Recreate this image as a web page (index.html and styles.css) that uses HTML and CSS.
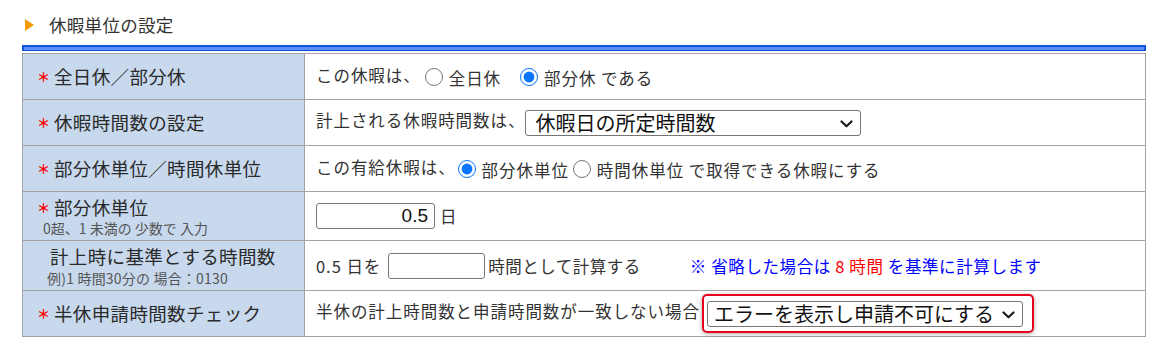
FILE: index.html
```html
<!DOCTYPE html>
<html lang="ja">
<head>
<meta charset="utf-8">
<title>休暇単位の設定</title>
<link rel="stylesheet" href="styles.css">
</head>
<body>
<div class="page">
  <div class="title"><span class="tri"></span><span class="title-text">休暇単位の設定</span></div>
  <div class="bar"></div>
  <table class="form">
    <colgroup><col class="c-label"><col class="c-value"></colgroup>
    <tr class="r46">
      <th><span class="req">＊</span>全日休／部分休</th>
      <td>この休暇は、<input type="radio" name="a" class="rb rb1"><span>全日休</span><input type="radio" name="a" class="rb rb2" checked><span>部分休 である</span></td>
    </tr>
    <tr class="r46">
      <th><span class="req">＊</span>休暇時間数の設定</th>
      <td>計上される休暇時間数は、<span class="sel"><select class="s1"><option>休暇日の所定時間数</option></select><svg class="chev" viewBox="0 0 13 8"><path d="M1.5 1.5 L6.5 6.3 L11.5 1.5" /></svg></span></td>
    </tr>
    <tr class="r46">
      <th><span class="req">＊</span>部分休単位／時間休単位</th>
      <td>この有給休暇は、<input type="radio" name="b" class="rb rb3" checked><span>部分休単位</span><input type="radio" name="b" class="rb rb4"><span>時間休単位 で取得できる休暇にする</span></td>
    </tr>
    <tr class="r49">
      <th class="two"><div class="main"><span class="req">＊</span>部分休単位</div><div class="sub sub1">0超、1 未満の 少数で 入力</div></th>
      <td><input type="text" class="num" value="0.5"><span class="unit">日</span></td>
    </tr>
    <tr class="r50">
      <th class="two"><div class="main nomark">計上時に基準とする時間数</div><div class="sub sub2">例)1 時間30分の 場合：0130</div></th>
      <td><span class="pre">0.5 日を</span><input type="text" class="hrs" value=""><span class="calc">時間として計算する</span><span class="note">※ 省略した場合は <span class="red">8 時間</span> を基準に計算します</span></td>
    </tr>
    <tr class="r46">
      <th><span class="req">＊</span>半休申請時間数チェック</th>
      <td>半休の計上時間数と申請時間数が一致しない場合<span class="hl"><span class="sel"><select class="s2"><option>エラーを表示し申請不可にする</option></select><svg class="chev" viewBox="0 0 13 8"><path d="M1.5 1.5 L6.5 6.3 L11.5 1.5" /></svg></span></span></td>
    </tr>
  </table>
</div>
</body>
</html>
```
FILE: styles.css
```css
html, body {
  margin: 0;
  padding: 0;
  background: #ffffff;
}
body {
  font-family: "Noto Sans CJK JP", "Noto Sans", sans-serif;
  color: #333333;
}
.page {
  width: 1168px;
}
.title {
  display: flex;
  align-items: center;
  height: 22px;
  padding: 14px 0 0 25px;
  margin-bottom: 9px;
}
.tri {
  width: 0;
  height: 0;
  border-top: 6px solid transparent;
  border-bottom: 6px solid transparent;
  border-left: 9px solid #f29a00;
  margin-right: 15px;
}
.title-text {
  font-size: 17.5px;
  line-height: 22px;
  letter-spacing: 0.3px;
  color: #333333;
}
.bar {
  margin-left: 22px;
  width: 1120px;
  height: 3px;
  background: #5c90f6;
  border: 2px solid #0b56dc;
  border-bottom-width: 1px;
  box-sizing: content-box;
}
.form {
  margin: 2px 0 0 22px;
  width: 1124px;
  border-collapse: collapse;
  table-layout: fixed;
}
.c-label { width: 282px; }
.form th, .form td {
  border: 1px solid #a3a3a3;
  padding: 0;
  vertical-align: middle;
}
.form th {
  background: #c8d9ee;
  text-align: left;
  font-weight: normal;
  font-size: 18.5px;
  line-height: 22px;
  letter-spacing: 0.35px;
  color: #2a2a2a;
  padding-left: 14px;
  white-space: nowrap;
}
.form td {
  font-size: 16.5px;
  line-height: 22px;
  letter-spacing: 0.95px;
  padding-left: 11px;
  white-space: nowrap;
  color: #333333;
}
.r46 > th, .r46 > td { height: 45px; }
.r49 > th, .r49 > td { height: 48px; }
.r50 > th, .r50 > td { height: 49px; }
.req {
  color: #ff0000;
  font-size: 13px;
  font-weight: bold;
  display: inline-block;
  width: 11px;
  margin-right: 6px;
  letter-spacing: 0;
  vertical-align: 2px;
  overflow: visible;
}
.two .main {
  line-height: 20px;
}
.two .main.nomark {
  padding-left: 13px;
}
.sub {
  font-size: 14px;
  line-height: 16px;
  letter-spacing: 0;
  color: #555555;
}
.sub1 { padding-left: 6px; margin-top: 2px; }
.sub2 { padding-left: 10px; margin-top: 4px; letter-spacing: 0.2px; }
.rb {
  width: 18px;
  height: 18px;
  margin: 0 6px 0 4px;
  vertical-align: -4px;
  accent-color: #0a75ff;
}
.rb2 { margin-left: 19px; }
.rb3 { margin-left: 2px; }
.rb4 { margin-left: 4px; }
.sel {
  position: relative;
  display: inline-block;
  vertical-align: middle;
}
.sel select {
  appearance: none;
  -webkit-appearance: none;
  display: block;
  height: 26px;
  border: 1px solid #767676;
  border-radius: 3px;
  background: #ffffff;
  color: #111111;
  font-family: "Noto Sans CJK JP", sans-serif;
  font-size: 20px;
  line-height: 24px;
  letter-spacing: 0;
  padding: 0 0 0 9px;
  margin: 0;
}
.s1 { width: 336px; margin-left: 0 !important; }
.s2 { width: 316px; padding-left: 6px !important; }
.chev {
  position: absolute;
  right: 8px;
  top: 10px;
  width: 13px;
  height: 8px;
}
.chev path {
  fill: none;
  stroke: #1a1a1a;
  stroke-width: 2.2;
  stroke-linecap: round;
  stroke-linejoin: round;
}
.num {
  width: 119px;
  height: 26px;
  box-sizing: border-box;
  border: 1px solid #767676;
  border-radius: 3px;
  text-align: right;
  padding: 0 6px 0 0;
  margin: 0;
  font-family: "Liberation Sans", Arial, sans-serif;
  font-size: 19px;
  letter-spacing: 0;
  color: #111111;
  vertical-align: middle;
}
.unit { margin-left: 5px; vertical-align: middle; }
.pre { vertical-align: middle; }
.hrs {
  width: 97px;
  height: 26px;
  box-sizing: border-box;
  border: 1px solid #767676;
  border-radius: 3px;
  margin: 0 3px 0 7px;
  padding: 0;
  vertical-align: middle;
}
.calc { letter-spacing: 0.5px; }
.form td > span { vertical-align: middle; }
.note {
  color: #0000ff;
  margin-left: 49px;
  letter-spacing: 0.6px;
}
.red { color: #ff0000; }
.hl {
  display: inline-block;
  vertical-align: middle;
  border: 2px solid #e8001c;
  border-radius: 5px;
  padding: 5px 9px 4px 3px;
  margin-left: 2px;
  box-shadow: 0 1px 4px rgba(0, 0, 0, 0.35);
}
```
